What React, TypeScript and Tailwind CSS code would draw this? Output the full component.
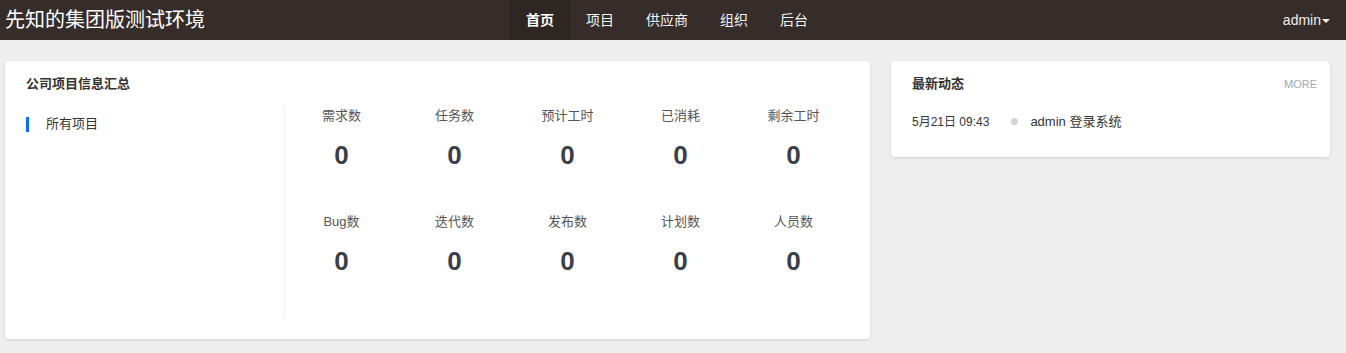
import React from "react";

const navItems = ["首页", "项目", "供应商", "组织", "后台"];

const stats = [
  { label: "需求数", value: 0 },
  { label: "任务数", value: 0 },
  { label: "预计工时", value: 0 },
  { label: "已消耗", value: 0 },
  { label: "剩余工时", value: 0 },
  { label: "Bug数", value: 0 },
  { label: "迭代数", value: 0 },
  { label: "发布数", value: 0 },
  { label: "计划数", value: 0 },
  { label: "人员数", value: 0 },
];

const App = () => {
  return (
    <div
      className="min-h-[353px] bg-[#eeeeee]"
      style={{ fontFamily: '"Liberation Sans", "Noto Sans CJK SC", sans-serif' }}
    >
      {/* top bar */}
      <div className="flex h-[40px] items-center bg-[#362d2a] text-white">
        <div className="w-[510px] pl-[5px] text-[20px] leading-[40px]">先知的集团版测试环境</div>
        <div className="flex h-full">
          {navItems.map((item, i) => (
            <div
              key={item}
              className={
                i === 0
                  ? "flex h-full items-center bg-[#2e2623] px-[16px] text-[14px] font-bold"
                  : "flex h-full items-center px-[16px] text-[14px] text-[#f2f2f2]"
              }
            >
              {item}
            </div>
          ))}
        </div>
        <div className="ml-auto flex items-center pr-[16px] text-[14px] text-[#eeeeee]">
          admin
          <span className="ml-[1px] mt-[1px] h-0 w-0 border-x-[4px] border-t-[4px] border-x-transparent border-t-[#eeeeee]" />
        </div>
      </div>

      <div className="flex items-start gap-[21px] pl-[5px] pt-[21px]">
        {/* company summary */}
        <div className="w-[865px] rounded-[4px] bg-white pb-[20px] pt-[14px] shadow-[0_1px_3px_rgba(0,0,0,0.12)]">
          <div className="pl-[21px] text-[13px] font-bold leading-[18px] text-[#333]">公司项目信息汇总</div>
          <div className="mt-[14px] flex">
            <div className="w-[280px] border-r border-[#eeeef2]">
              <div className="flex h-[34px] items-center pl-[21px]">
                <span className="h-[15px] w-[3px] bg-[#0a6cf0]" />
                <span className="ml-[17px] text-[13px] text-[#333]">所有项目</span>
              </div>
            </div>
            <div className="grid w-[565px] grid-cols-5">
              {stats.map((s) => (
                <div key={s.label} className="flex h-[106px] flex-col items-center">
                  <div className="text-[13px] leading-[18px] text-[#555]">{s.label}</div>
                  <div className="mt-[15px] text-[26px] font-bold leading-[30px] text-[#3a3f4c]">{s.value}</div>
                </div>
              ))}
            </div>
          </div>
        </div>

        {/* latest activity */}
        <div className="h-[96px] w-[439px] rounded-[4px] bg-white pl-[21px] pr-[13px] pt-[14px] shadow-[0_1px_3px_rgba(0,0,0,0.12)]">
          <div className="flex items-center justify-between">
            <div className="text-[13px] font-bold leading-[18px] text-[#333]">最新动态</div>
            <div className="text-[11px] text-[#a4a9b4]">MORE</div>
          </div>
          <div className="mt-[19px] flex items-center">
            <span className="text-[12px] text-[#333]">5月21日 09:43</span>
            <span className="ml-[22px] h-[7px] w-[7px] rounded-full bg-[#d3d5de]" />
            <span className="ml-[12px] text-[13px] text-[#333]">admin 登录系统</span>
          </div>
        </div>
      </div>
    </div>
  );
};

export default App;
